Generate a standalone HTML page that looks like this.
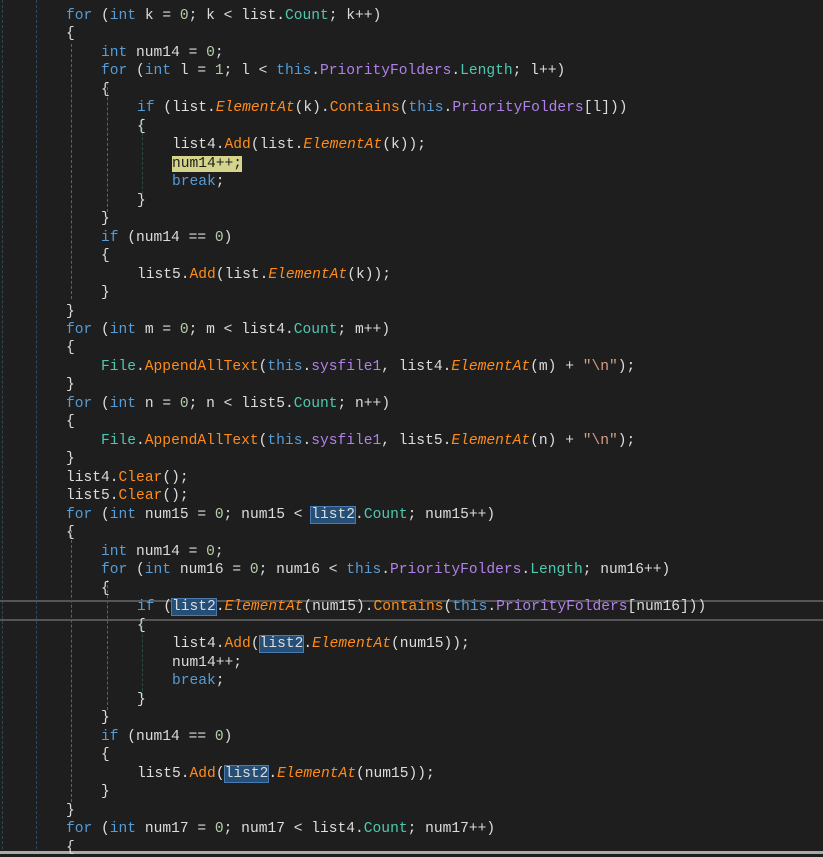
<!DOCTYPE html>
<html><head><meta charset="utf-8"><style>
body{margin:0;width:823px;height:854px;background:#1e1e1e;overflow:hidden;position:relative;font-family:"Liberation Mono",monospace;font-size:14.6px;color:#dcdcdc}
.l{position:absolute;white-space:pre;line-height:18px;height:18px}
.k{color:#569cd6}.c{color:#4ec9b0}.p{color:#b180e8}.n{color:#b5cea8}.m{color:#ff8c1a}.e{color:#ff8c1a;font-style:italic}.s{color:#d69d85}
.h{background:#264f78;outline:1px solid #4a7ab0}
.y{background:#d4d48a;color:#1e1e1e}
.g{position:absolute;width:0;border-left:1px dashed}
</style></head><body>
<div class="g" style="left:2px;top:0;height:854px;border-color:#2a4a5a"></div>
<div class="g" style="left:36px;top:0;height:854px;border-color:#2a4a6a"></div>
<div class="g" style="left:71px;top:44px;height:255px;border-color:#7a4a9a"></div>
<div class="g" style="left:107px;top:82px;height:130px;border-color:#7a4a9a"></div>
<div class="g" style="left:142px;top:118px;height:76px;border-color:#2a4a3a"></div>
<div class="g" style="left:71px;top:530px;height:272px;border-color:#7a4a9a"></div>
<div class="g" style="left:107px;top:580px;height:130px;border-color:#7a4a9a"></div>
<div class="g" style="left:142px;top:620px;height:76px;border-color:#2a4a3a"></div>
<div style="position:absolute;left:0;top:600px;width:823px;height:17px;border-top:2px solid #555;border-bottom:2px solid #555"></div>
<div style="position:absolute;left:0;top:851px;width:823px;height:3px;background:#aaa"></div>
<div class="l" style="left:66px;top:7px"><span class="k">for</span> (<span class="k">int</span> k = <span class="n">0</span>; k &lt; list.<span class="c">Count</span>; k++)</div>
<div class="l" style="left:66px;top:25px">{</div>
<div class="l" style="left:101px;top:44px"><span class="k">int</span> num14 = <span class="n">0</span>;</div>
<div class="l" style="left:101px;top:62px"><span class="k">for</span> (<span class="k">int</span> l = <span class="n">1</span>; l &lt; <span class="k">this</span>.<span class="p">PriorityFolders</span>.<span class="c">Length</span>; l++)</div>
<div class="l" style="left:101px;top:81px">{</div>
<div class="l" style="left:137px;top:99px"><span class="k">if</span> (list.<span class="e">ElementAt</span>(k).<span class="m">Contains</span>(<span class="k">this</span>.<span class="p">PriorityFolders</span>[l]))</div>
<div class="l" style="left:137px;top:118px">{</div>
<div class="l" style="left:172px;top:136px">list4.<span class="m">Add</span>(list.<span class="e">ElementAt</span>(k));</div>
<div class="l" style="left:172px;top:155px"><span class="y">num14++;</span></div>
<div class="l" style="left:172px;top:173px"><span class="k">break</span>;</div>
<div class="l" style="left:137px;top:192px">}</div>
<div class="l" style="left:101px;top:210px">}</div>
<div class="l" style="left:101px;top:229px"><span class="k">if</span> (num14 == <span class="n">0</span>)</div>
<div class="l" style="left:101px;top:247px">{</div>
<div class="l" style="left:137px;top:266px">list5.<span class="m">Add</span>(list.<span class="e">ElementAt</span>(k));</div>
<div class="l" style="left:101px;top:284px">}</div>
<div class="l" style="left:66px;top:303px">}</div>
<div class="l" style="left:66px;top:321px"><span class="k">for</span> (<span class="k">int</span> m = <span class="n">0</span>; m &lt; list4.<span class="c">Count</span>; m++)</div>
<div class="l" style="left:66px;top:339px">{</div>
<div class="l" style="left:101px;top:358px"><span class="c">File</span>.<span class="m">AppendAllText</span>(<span class="k">this</span>.<span class="p">sysfile1</span>, list4.<span class="e">ElementAt</span>(m) + <span class="s">"\n"</span>);</div>
<div class="l" style="left:66px;top:376px">}</div>
<div class="l" style="left:66px;top:395px"><span class="k">for</span> (<span class="k">int</span> n = <span class="n">0</span>; n &lt; list5.<span class="c">Count</span>; n++)</div>
<div class="l" style="left:66px;top:413px">{</div>
<div class="l" style="left:101px;top:432px"><span class="c">File</span>.<span class="m">AppendAllText</span>(<span class="k">this</span>.<span class="p">sysfile1</span>, list5.<span class="e">ElementAt</span>(n) + <span class="s">"\n"</span>);</div>
<div class="l" style="left:66px;top:450px">}</div>
<div class="l" style="left:66px;top:469px">list4.<span class="m">Clear</span>();</div>
<div class="l" style="left:66px;top:487px">list5.<span class="m">Clear</span>();</div>
<div class="l" style="left:66px;top:506px"><span class="k">for</span> (<span class="k">int</span> num15 = <span class="n">0</span>; num15 &lt; <span class="h">list2</span>.<span class="c">Count</span>; num15++)</div>
<div class="l" style="left:66px;top:524px">{</div>
<div class="l" style="left:101px;top:543px"><span class="k">int</span> num14 = <span class="n">0</span>;</div>
<div class="l" style="left:101px;top:561px"><span class="k">for</span> (<span class="k">int</span> num16 = <span class="n">0</span>; num16 &lt; <span class="k">this</span>.<span class="p">PriorityFolders</span>.<span class="c">Length</span>; num16++)</div>
<div class="l" style="left:101px;top:580px">{</div>
<div class="l" style="left:137px;top:598px"><span class="k">if</span> (<span class="h">list2</span>.<span class="e">ElementAt</span>(num15).<span class="m">Contains</span>(<span class="k">this</span>.<span class="p">PriorityFolders</span>[num16]))</div>
<div class="l" style="left:137px;top:617px">{</div>
<div class="l" style="left:172px;top:635px">list4.<span class="m">Add</span>(<span class="h">list2</span>.<span class="e">ElementAt</span>(num15));</div>
<div class="l" style="left:172px;top:654px">num14++;</div>
<div class="l" style="left:172px;top:672px"><span class="k">break</span>;</div>
<div class="l" style="left:137px;top:691px">}</div>
<div class="l" style="left:101px;top:709px">}</div>
<div class="l" style="left:101px;top:728px"><span class="k">if</span> (num14 == <span class="n">0</span>)</div>
<div class="l" style="left:101px;top:746px">{</div>
<div class="l" style="left:137px;top:765px">list5.<span class="m">Add</span>(<span class="h">list2</span>.<span class="e">ElementAt</span>(num15));</div>
<div class="l" style="left:101px;top:783px">}</div>
<div class="l" style="left:66px;top:802px">}</div>
<div class="l" style="left:66px;top:820px"><span class="k">for</span> (<span class="k">int</span> num17 = <span class="n">0</span>; num17 &lt; list4.<span class="c">Count</span>; num17++)</div>
<div class="l" style="left:66px;top:839px">{</div>
</body></html>
